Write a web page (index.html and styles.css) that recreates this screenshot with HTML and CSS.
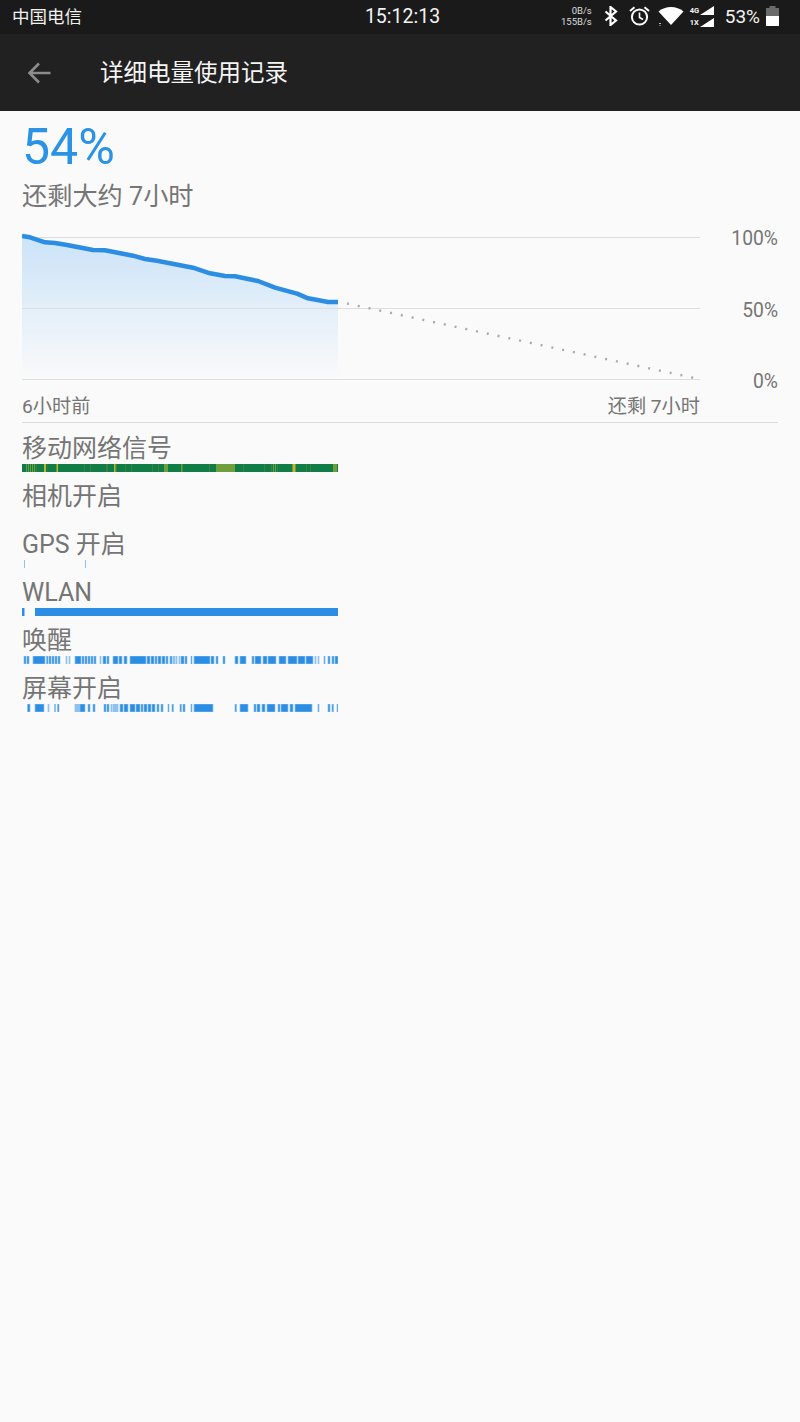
FILE: index.html
```html
<!DOCTYPE html>
<html lang="zh-CN">
<head>
  <meta charset="UTF-8">
  <meta name="viewport" content="width=device-width, initial-scale=1.0">
  <title>详细电量使用记录</title>
  <link rel="stylesheet" href="styles.css">
</head>
<body>
  <div class="status-bar">
    <span class="carrier">中国电信</span>
    <span class="clock">15:12:13</span>
    <div class="status-right">
      <div class="net-speed"><span>0B/s</span><span>155B/s</span></div>
      <svg class="icon-bt" width="14" height="20" viewBox="0 0 14 20">
        <path d="M1.5 5.5 L12 14.5 L6.5 19 V1 L12 5.5 L1.5 14.5" fill="none" stroke="#fff" stroke-width="2.2"/>
      </svg>
      <svg class="icon-alarm" width="21" height="20" viewBox="0 0 21 20">
        <circle cx="10.5" cy="11" r="7.6" fill="none" stroke="#fff" stroke-width="2"/>
        <path d="M10.5 6.5 V11.5 L14 13.5" fill="none" stroke="#fff" stroke-width="1.6"/>
        <path d="M1 5 L5.5 1.2 M20 5 L15.5 1.2" fill="none" stroke="#fff" stroke-width="2"/>
      </svg>
      <svg class="icon-wifi" width="26" height="20" viewBox="0 0 26 20">
        <path d="M0.5 5.5 C7 -0.5 19 -0.5 25.5 5.5 L13 19 Z" fill="#fff"/>
        <path d="M1 17.5 h2 M1.5 19.5 h1" stroke="#bbb" stroke-width="1"/>
      </svg>
      <div class="signals">
        <div class="signal"><span>4G</span><svg width="14" height="9" viewBox="0 0 14 9"><path d="M14 0 V9 H0 Z" fill="#fff"/></svg></div>
        <div class="signal"><span>1X</span><svg width="14" height="9" viewBox="0 0 14 9"><path d="M14 0 V9 H0 Z" fill="#fff"/></svg></div>
      </div>
      <span class="batt-text">53%</span>
      <svg class="icon-batt" width="13" height="20" viewBox="0 0 13 20">
        <path d="M3.5 0 H9.5 V2 H13 V20 H0 V2 H3.5 Z" fill="#6b6b6b"/>
        <rect y="10" width="13" height="10" fill="#fff"/>
      </svg>
    </div>
  </div>

  <header class="toolbar">
    <svg class="back" width="24" height="22" viewBox="0 0 24 22">
      <path d="M23.5 11 H2.5 M12 1.5 L2.5 11 L12 20.5" fill="none" stroke="#8c8c8c" stroke-width="2.6"/>
    </svg>
    <h1 class="title">详细电量使用记录</h1>
  </header>

  <main class="content">
    <div class="level">54%</div>
    <div class="remaining">还剩大约 7小时</div>

    <div class="chart">
      <svg class="chart-plot" width="678" height="166" viewBox="22 225 678 166">
        <defs>
          <linearGradient id="fade" x1="0" y1="0" x2="0" y2="1">
            <stop offset="0" stop-color="#cbe3f8"/>
            <stop offset="1" stop-color="#fafafa"/>
          </linearGradient>
        </defs>
        <path fill="url(#fade)" d="M22 236 L30 237.3 L45 242.3 L55 243 L67 245 L93 250 L105 250.3 L133 255.7 L145 259 L157 260.7 L193 267.7 L210 273.3 L225 276 L235 276.3 L258 281 L275 287.7 L297 293.7 L308 298.3 L328 302 L338 302 V379 H22 Z"/>
        <path class="grid" d="M22 237.5 H700 M22 308.5 H700 M22 379.5 H700"/>
        <path class="forecast" d="M347 303.5 L699 379"/>
        <path class="level-line" d="M22 236 L30 237.3 L45 242.3 L55 243 L67 245 L93 250 L105 250.3 L133 255.7 L145 259 L157 260.7 L193 267.7 L210 273.3 L225 276 L235 276.3 L258 281 L275 287.7 L297 293.7 L308 298.3 L328 302 L338 302"/>
      </svg>
      <div class="chart-axis">
        <span>100%</span>
        <span>50%</span>
        <span>0%</span>
      </div>
    </div>
    <div class="chart-foot">
      <div class="chart-times">
        <span>6小时前</span>
        <span>还剩 7小时</span>
      </div>
    </div>

    <div class="row"><div class="row-label">移动网络信号</div><svg class="bar" id="bar-signal" viewBox="22 0 316 8"></svg></div>
    <div class="row"><div class="row-label">相机开启</div><svg class="bar" viewBox="22 0 316 8"></svg></div>
    <div class="row"><div class="row-label">GPS 开启</div><svg class="bar" id="bar-gps" viewBox="22 0 316 8"></svg></div>
    <div class="row"><div class="row-label">WLAN</div><svg class="bar" id="bar-wlan" viewBox="22 0 316 8"></svg></div>
    <div class="row"><div class="row-label">唤醒</div><svg class="bar" id="bar-wake" viewBox="22 0 316 8"></svg></div>
    <div class="row"><div class="row-label">屏幕开启</div><svg class="bar" id="bar-screen" viewBox="22 0 316 8"></svg></div>
  </main>

  <script src="app.js"></script>
</body>
</html>
```

FILE: styles.css
```css
body {
  font-family: Roboto, "Noto Sans CJK SC", sans-serif;
  margin: 0;
  padding: 0;
  background-color: #fafafa;
  color: #757575;
}
.status-bar {
  height: 34px;
  box-sizing: border-box;
  background-color: #1a1a1a;
  color: #f2f2f2;
  display: grid;
  grid-template-columns: 1fr auto 1fr;
  align-items: center;
  padding: 0 21px 2px 12px;
}
.carrier {
  font-size: 17.5px;
  margin-bottom: 2px;
}
.clock {
  font-size: 19.5px;
  margin-left: 14px;
}
.status-right {
  display: flex;
  align-items: center;
  justify-content: flex-end;
}
.net-speed {
  display: flex;
  flex-direction: column;
  align-items: flex-end;
  font-size: 9.5px;
  line-height: 11px;
  color: #ddd;
  margin-right: 12px;
}
.icon-bt {
  margin-right: 11px;
}
.icon-alarm {
  margin-right: 8px;
}
.icon-wifi {
  margin-right: 6px;
}
.signals {
  display: flex;
  flex-direction: column;
  gap: 3px;
  margin-right: 11px;
}
.signal {
  display: flex;
  align-items: flex-end;
  gap: 1px;
  font-size: 7.5px;
  font-weight: 700;
  line-height: 9px;
}
.signal span {
  width: 9px;
}
.batt-text {
  font-size: 19px;
  margin-right: 6px;
}
.toolbar {
  height: 77px;
  background-color: #212121;
  display: flex;
  align-items: center;
  padding-left: 27px;
  box-sizing: border-box;
}
.title {
  margin: 0 0 3px 49px;
  font-size: 23.5px;
  font-weight: 400;
  color: #f5f5f5;
}
.content {
  padding: 0 22px;
}
.level {
  font-size: 50px;
  line-height: 60px;
  margin-top: 6px;
  color: #2b93e6;
}
.remaining {
  font-size: 25.2px;
  line-height: 32px;
  margin-top: 4px;
}
.chart {
  display: flex;
  margin-top: 12px;
}
.chart-plot {
  display: block;
}
.grid {
  fill: none;
  stroke: #dedede;
  stroke-width: 1;
}
.forecast {
  fill: none;
  stroke: #aaa;
  stroke-width: 2.4;
  stroke-dasharray: 2 9;
}
.level-line {
  fill: none;
  stroke: #2b8ee4;
  stroke-width: 4.5;
  stroke-linejoin: round;
}
.chart-axis {
  flex: 1;
  display: flex;
  flex-direction: column;
  justify-content: space-between;
  align-items: flex-end;
  font-size: 19.3px;
  line-height: 24px;
  padding-top: 2px;
  margin-bottom: -3px;
}
.chart-foot {
  margin-top: 3px;
  margin-bottom: 1px;
  padding-bottom: 4px;
  border-bottom: 1px solid #dedede;
}
.chart-times {
  width: 678px;
  display: flex;
  justify-content: space-between;
  font-size: 19.2px;
  line-height: 24px;
  padding-top: 1px;
  margin-bottom: -1px;
}
.row {
  padding-top: 10px;
  width: 316px;
}
.row-label {
  font-size: 25px;
  line-height: 30px;
  white-space: nowrap;
}
.bar {
  display: block;
  width: 316px;
  height: 8px;
  filter: blur(0.4px);
}
#bar-wake rect,
#bar-screen rect {
  stroke: #8fc2ee;
  stroke-width: 0.7;
}
```

FILE: app.js
```js
const BLUE = "#2b8ee4";
const PALE = "#8fc2ee";
const GREEN = "#0f7d45";
const OLIVE = "#6f9e3c";
const YELLOW = "#c9b430";
const DARK = "#3f7f3f";

// each segment is [start, end, colour], x in page pixels
const bars = {
  "bar-signal": [
    [22, 338, GREEN],
    [26, 27, OLIVE], [28, 29, OLIVE], [30, 31, OLIVE], [32, 33, OLIVE], [34, 35, OLIVE], [36, 37, DARK],
    [44, 46, YELLOW], [47, 47.6, DARK], [56.5, 58, YELLOW],
    [84, 85, DARK], [90, 91, DARK], [106, 108, DARK], [114, 115.5, YELLOW], [116, 117, DARK],
    [125, 126, DARK], [131, 132, DARK], [152, 153, DARK], [158, 159, DARK], [164, 168, OLIVE],
    [181, 182.5, OLIVE], [209, 210, DARK], [216, 235, OLIVE], [243, 244, DARK],
    [264, 265, DARK], [271, 272, DARK], [273, 274, OLIVE], [275, 276, OLIVE], [277, 278, DARK],
    [292.5, 295.5, YELLOW], [306, 307, DARK], [310, 311, DARK], [333, 337, OLIVE]
  ],
  "bar-gps": [
    [24, 25, PALE], [85, 86, PALE]
  ],
  "bar-wlan": [
    [22, 24.5, BLUE], [35, 338, BLUE]
  ],
  "bar-wake": [
    [24, 26, BLUE], [27, 29, BLUE], [33, 45, BLUE], [46.5, 48, BLUE], [49, 51, BLUE], [52, 54, BLUE], [55, 57, BLUE], [58, 60, BLUE],
    [66, 67, PALE], [69, 70, PALE],
    [75, 81, BLUE], [82, 84, BLUE], [85, 87, BLUE], [88, 90, BLUE], [91, 93, BLUE], [94, 96, BLUE],
    [100, 101, PALE], [103, 106, BLUE], [107, 109, BLUE], [113, 118, BLUE], [119, 122, BLUE], [124, 127, BLUE],
    [130, 146, BLUE], [147, 150, BLUE], [151, 154, BLUE], [155, 157, BLUE], [158, 161, BLUE], [162, 165, BLUE],
    [166, 168, BLUE], [170, 172, BLUE], [173, 175, PALE], [176, 177, PALE], [179, 180, PALE], [181, 184, BLUE], [185, 187, BLUE],
    [191, 192, BLUE], [194, 210, BLUE], [211, 214, BLUE], [216, 218, BLUE], [223, 225, BLUE],
    [235, 238, BLUE], [240, 246, BLUE], [252, 254, BLUE], [255, 261, BLUE], [263, 267, BLUE], [268, 276, BLUE],
    [279, 286, BLUE], [288, 297, BLUE], [298, 305, BLUE], [306, 313, BLUE], [315, 316, PALE], [318, 319, PALE],
    [324, 325, BLUE], [328, 330, BLUE], [332, 334, BLUE], [335, 338, BLUE]
  ],
  "bar-screen": [
    [27.5, 30, BLUE], [35, 44, BLUE], [48, 49, PALE], [54.5, 55.5, BLUE], [57.5, 59, BLUE],
    [75, 80, PALE], [80, 85, BLUE], [88, 90, BLUE], [93, 95, BLUE],
    [104, 106, BLUE], [107, 109, BLUE], [111, 112, PALE], [113, 118, PALE], [120, 123, BLUE], [124, 128, BLUE],
    [130, 135, BLUE], [136, 140, BLUE], [141, 143, BLUE], [144, 147, BLUE], [148, 151, BLUE], [152, 155, BLUE], [157, 159, BLUE], [161, 163, BLUE],
    [168, 169, BLUE], [172, 173.5, BLUE], [180, 181.5, BLUE], [183, 185, BLUE],
    [191, 192, BLUE], [194, 213, BLUE],
    [235, 236.5, BLUE], [240, 248, BLUE], [254, 256, BLUE], [257, 260, BLUE], [262, 265, BLUE], [267, 275, BLUE],
    [278, 280, BLUE], [281, 288, BLUE], [290, 293, BLUE], [295, 312, BLUE],
    [318, 319, BLUE], [328, 330, BLUE], [332, 333.5, BLUE], [337, 338, BLUE]
  ]
};

Object.keys(bars).forEach((id) => {
  const svg = document.getElementById(id);
  bars[id].forEach(([start, end, colour]) => {
    const rect = document.createElementNS("http://www.w3.org/2000/svg", "rect");
    rect.setAttribute("x", start);
    rect.setAttribute("y", 0);
    rect.setAttribute("width", end - start);
    rect.setAttribute("height", 8);
    rect.setAttribute("fill", colour);
    svg.appendChild(rect);
  });
});
```
